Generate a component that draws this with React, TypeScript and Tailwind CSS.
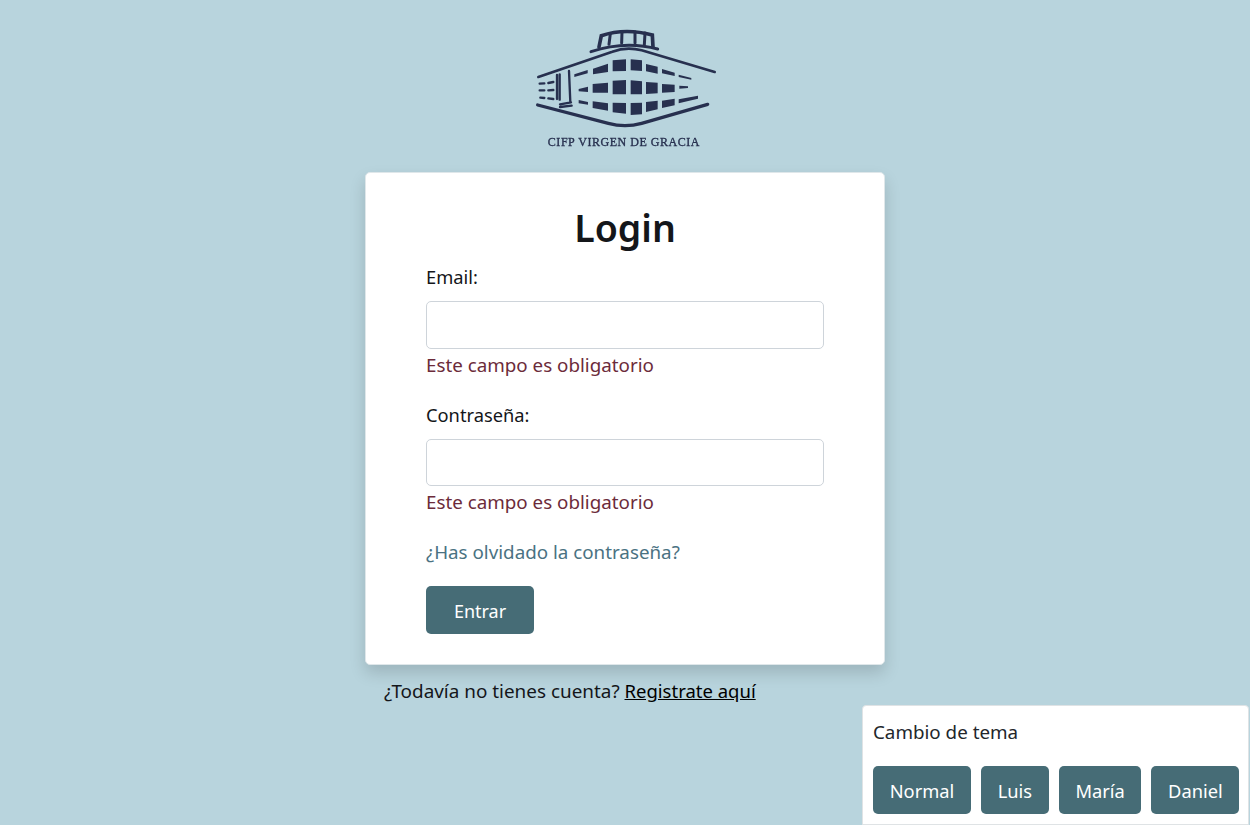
const font = "[font-family:'Noto_Sans',sans-serif]";

function Logo() {
  const windows = [
    '148,178 188,165 188,175 148,186',
    '204,161 249,146 249,171 204,178',
    '263,136 303,133 303,168 263,169',
    '317,133 351,136 351,168 317,166',
    '363,147 398,155 398,176 363,169',
    '411,162 449,173 449,183 411,175',
    '461,179 499,189 499,194 461,186',
    '161,222 189,215 189,231 161,229',
    '203,207 249,203 249,233 203,233',
    '263,197 303,195 303,238 263,238',
    '317,196 351,199 351,238 317,238',
    '363,201 398,203 398,235 363,237',
    '411,207 449,209 449,231 411,233',
    '463,212 489,214 489,219 463,221',
    '161,255 189,261 189,269 161,265',
    '203,259 249,265 249,287 203,279',
    '263,263 303,264 303,296 263,292',
    '317,264 351,263 351,298 317,300',
    '363,261 398,257 398,283 363,291',
    '411,257 449,251 449,271 411,279',
    '461,253 519,242 519,251 461,265',
  ];
  return (
    <svg viewBox="0 0 600 435" className="w-[200px] h-[145px] blur-[0.4px]">
      <g fill="none" stroke="#27304f" strokeLinecap="round">
        <path strokeWidth="9" d="M198 110 Q300 76 398 102" />
        <path strokeWidth="11" d="M222 96 L229 62 Q300 38 382 60 L384 96" />
        <path strokeWidth="9" d="M252 88 L256 56 M290 84 L291 50 M330 84 L330 50 M358 90 L360 54" />
        <path strokeWidth="8" d="M40 186 L262 110 Q305 94 350 106 L569 171" />
        <path strokeWidth="10" d="M38 270 L250 325 Q300 339 350 325 L548 268" />
        <path strokeWidth="7" d="M96 180 L96 252 M104 178 L104 254 M132 168 L136 262 M105 268 L138 262 M105 276 L140 272" />
        <path strokeWidth="7" d="M44 206 L58 205 M70 204 L85 201 M44 226 L58 226 M70 226 L85 225 M46 248 L58 249 M70 250 L85 252" />
      </g>
      <g fill="#27304f">
        {windows.map((p) => (
          <polygon key={p} points={p} />
        ))}
      </g>
      <text
        x="296"
        y="393"
        textAnchor="middle"
        fill="#27304f"
        stroke="#27304f"
        strokeWidth="1"
        fontSize="36"
        textLength="455"
        fontFamily="'Liberation Serif', serif"
      >
        CIFP VIRGEN DE GRACIA
      </text>
    </svg>
  );
}

function Field({ label, id }: { label: string; id: string }) {
  return (
    <div>
      <label htmlFor={id} className="block h-[28px] leading-[28px] text-[18.3px]">
        {label}
      </label>
      <input
        id={id}
        className="mt-[10px] block w-full h-[47.6px] rounded-[5px] border border-[#ced4da] bg-white"
      />
      <p className="mt-[2px] h-[29px] leading-[29px] text-[#6c2b3a]">Este campo es obligatorio</p>
    </div>
  );
}

export default function App() {
  const temas = ['Normal', 'Luis', 'María', 'Daniel'];

  return (
    <div
      className={`${font} relative h-[825px] overflow-hidden bg-[#b8d4dd] text-[18.8px] text-[#14161a] flex flex-col items-center pt-[15px]`}
    >
      <Logo />

      <div className="mt-[12px] w-[520px] h-[493px] rounded-[5px] border border-[#dfe7ea] bg-white px-[60px] pt-[28px] shadow-[0_8px_16px_rgba(0,0,0,0.15)]">
        <h1 className="text-center text-[37.5px] leading-[54px] font-semibold text-[#14161a]">Login</h1>
        <div className="mt-[8px] flex flex-col gap-[21px]">
          <Field label="Email:" id="email" />
          <Field label="Contraseña:" id="password" />
        </div>
        <a href="#" className="mt-[20.4px] block h-[29px] leading-[29px] text-[#4a7282]">
          ¿Has olvidado la contraseña?
        </a>
        <button className="mt-[19px] block w-[108px] h-[48px] rounded-[5px] bg-[#466c76] pt-[3px] text-[18px] text-white">
          Entrar
        </button>
      </div>

      <p className="mt-[11px] w-[520px] pl-[19px] h-[29px] leading-[29px] text-[18.9px]">
        ¿Todavía no tienes cuenta?{' '}
        <a href="#" className="underline text-black text-[18.5px]">
          Registrate aquí
        </a>
      </p>

      <div className="absolute right-[1px] bottom-0 w-[387px] h-[120px] rounded-t-[4px] border border-[#dfe3e5] bg-white px-[10px] pt-[12px]">
        <p className="h-[29px] leading-[29px] text-[#22262b]">Cambio de tema</p>
        <div className="mt-[19px] flex gap-[10px]">
          {temas.map((t) => (
            <button key={t} className="h-[48px] rounded-[5px] bg-[#466c76] px-[16.7px] pt-[1px] text-[18.3px] text-white">
              {t}
            </button>
          ))}
        </div>
      </div>
    </div>
  );
}
